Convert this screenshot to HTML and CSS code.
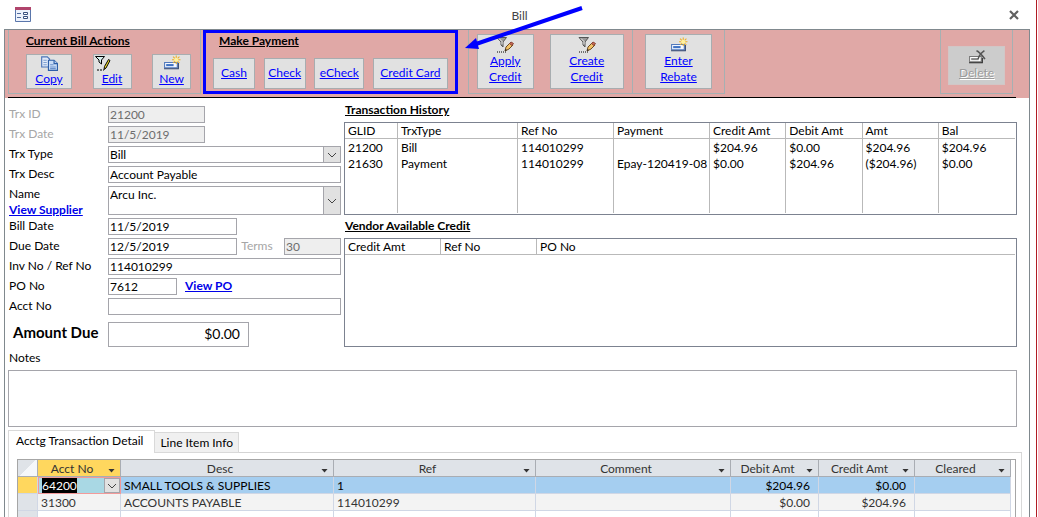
FILE: index.html
```html
<!DOCTYPE html>
<html lang="en">
<head>
  <meta charset="UTF-8">
  <meta name="viewport" content="width=device-width, initial-scale=1.0">
  <title>Bill</title>
  <link rel="stylesheet" href="styles.css">
</head>
<body>
  <!-- shared toolbar icons -->
  <svg class="icon-defs" aria-hidden="true">
    <symbol id="icon-copy" viewBox="0 0 16 14">
      <path d="M1.5 1.5h5l2 2v7h-7z" fill="#dfe9f8" stroke="#4a74b8"/>
      <path d="M3 4.500h3M3 6.500h3M3 8.500h3" stroke="#7f9fd0"/>
      <path d="M7.500 4.500h5l3 3v6h-8z" fill="#c9dcf6" stroke="#2d5ea8"/>
      <path d="M12.500 4.500v3h3" fill="#b8cdec" stroke="#2d5ea8"/>
      <path d="M9 8.500h3M9 10.500h5M9 12h5" stroke="#6a90cc"/>
    </symbol>
    <symbol id="icon-edit" viewBox="0 0 16 16">
      <path d="M.5 1.500h9L6.500 5v4L4 7V5z" fill="#d8f0ee" stroke="#000"/>
      <path d="M2 15h2M5 15h2M8 15h1" stroke="#000"/>
      <path d="M13.500 4.500l1.500 1-4 7.500-2 1.500.5-3z" fill="#f0dc28" stroke="#000"/>
    </symbol>
    <symbol id="icon-filter-edit" viewBox="0 0 18 16">
      <path d="M1 .5h9.500L7 5v5L5 8V5z" fill="#999" stroke="#555"/>
      <path d="M3 1.500l3 3v3" fill="none" stroke="#eee"/>
      <path d="M1 15h1M3 15h1M5 15h1M7 15h1M9 15h1" stroke="#000"/>
      <path d="M9 14l1-4 4-4 3 2-4 4z" fill="#f2c267" stroke="#6b4a20"/>
      <path d="M13.500 6.500l1.500-1.500 2.500 1.500-1.500 2z" fill="#c96b5a" stroke="#8a4436"/>
      <path d="M9 14l.5-2 1.500 1z" fill="#222"/>
    </symbol>
    <symbol id="icon-new" viewBox="0 0 17 14">
      <path d="M1.500 6.500h12v5h-12z" fill="#f4f8ff" stroke="#5279bd"/>
      <path d="M3 8h7v2H3z" fill="#3f72c4"/>
      <path d="M1 12.500h13.500V7" fill="none" stroke="#2a3f6c"/>
      <path d="M12.500 0v8M8.500 4h8M9.500 1l6 6M15.500 1l-6 6" stroke="#f0b020"/>
      <circle cx="12.500" cy="4" r="2" fill="#fff2a0"/>
    </symbol>
    <symbol id="icon-delete" viewBox="0 0 17 14">
      <path d="M1.500 6.500h11v5h-11z" fill="#fff" stroke="#777"/>
      <path d="M3 8h7v2H3z" fill="#888"/>
      <path d="M1 12.500h12.500V8" fill="none" stroke="#222"/>
      <path d="M8 1c3 1 5 4 8 8M15.500 1c-3 2-5 4-6 8" fill="none" stroke="#555" stroke-width="1.500"/>
    </symbol>
  </svg>

  <div class="window">
    <header class="title-bar">
      <svg class="form-icon" viewBox="0 0 16 15" aria-hidden="true">
        <path d="M.5.5h15v14H.5z" fill="#edf2fc" stroke="#5a76ab"/>
        <path d="M0 0h16v3H0z" fill="#b0446c"/>
        <path d="M2 6.500h4M2 10.500h4" stroke="#506a9c"/>
        <path d="M8.500 5.500h4v2h-4zM8.500 9.500h4v2h-4z" fill="#fff" stroke="#38507f"/>
      </svg>
      <h1>Bill</h1>
      <button class="close" aria-label="Close">
        <svg viewBox="0 0 10 10"><path d="M1 1l8 8M9 1L1 9" stroke="#606060" stroke-width="2.200"/></svg>
      </button>
    </header>

    <main class="form">
      <div class="toolbar">
        <section class="group actions">
          <h2>Current Bill Actions</h2>
          <div class="buttons">
            <button class="copy"><svg class="icon"><use href="#icon-copy"/></svg>Copy</button>
            <button class="edit"><svg class="icon"><use href="#icon-edit"/></svg>Edit</button>
            <button class="new"><svg class="icon"><use href="#icon-new"/></svg>New</button>
          </div>
        </section>
        <section class="group payment">
          <h2>Make Payment</h2>
          <div class="buttons">
            <button>Cash</button>
            <button>Check</button>
            <button class="echeck">eCheck</button>
            <button class="card">Credit Card</button>
          </div>
          <svg class="pointer" viewBox="0 0 120 48" aria-hidden="true">
            <path d="M118 4L12 40" stroke="#00f" stroke-width="4"/>
            <path d="M1 44l11-10 3 11z" fill="#00f"/>
          </svg>
        </section>
        <section class="group credit">
          <button class="apply"><svg class="icon"><use href="#icon-filter-edit"/></svg>Apply<br>Credit</button>
          <button class="create"><svg class="icon"><use href="#icon-filter-edit"/></svg>Create<br>Credit</button>
        </section>
        <section class="group rebate">
          <button><svg class="icon"><use href="#icon-new"/></svg>Enter<br>Rebate</button>
        </section>
        <section class="group delete">
          <button disabled><svg class="icon"><use href="#icon-delete"/></svg>Delete</button>
        </section>
      </div>

      <div class="details">
        <div class="fields">
          <label class="off" for="trx-id">Trx ID</label>
          <input class="short" id="trx-id" value="21200" disabled>
          <label class="off" for="trx-date">Trx Date</label>
          <input class="short" id="trx-date" value="11/5/2019" disabled>
          <label for="trx-type">Trx Type</label>
          <select id="trx-type"><option>Bill</option></select>
          <label for="trx-desc">Trx Desc</label>
          <input id="trx-desc" value="Account Payable">
          <div class="name-label">
            <label for="name">Name</label>
            <a href="#supplier">View Supplier</a>
          </div>
          <select class="name" id="name"><option>Arcu Inc.</option></select>
          <label for="bill-date">Bill Date</label>
          <input class="date" id="bill-date" value="11/5/2019">
          <label for="due-date">Due Date</label>
          <div class="line due">
            <input class="date" id="due-date" value="12/5/2019">
            <label class="off" for="terms">Terms</label>
            <input class="terms" id="terms" value="30" disabled>
          </div>
          <label for="inv-no">Inv No / Ref No</label>
          <input id="inv-no" value="114010299">
          <label for="po-no">PO No</label>
          <div class="line po">
            <input id="po-no" value="7612">
            <a href="#po">View PO</a>
          </div>
          <label for="acct-no">Acct No</label>
          <input id="acct-no">
          <label class="amount-label" for="amount">Amount Due</label>
          <input class="amount" id="amount" value="$0.00">
        </div>

        <div class="lists">
          <h2>Transaction History</h2>
          <div class="list-box">
            <table class="history">
              <thead>
                <tr>
                  <th class="glid">GLID</th>
                  <th class="type">TrxType</th>
                  <th class="ref">Ref No</th>
                  <th class="ref">Payment</th>
                  <th>Credit Amt</th>
                  <th>Debit Amt</th>
                  <th>Amt</th>
                  <th>Bal</th>
                </tr>
              </thead>
              <tbody>
                <tr><td>21200</td><td>Bill</td><td>114010299</td><td></td><td>$204.96</td><td>$0.00</td><td>$204.96</td><td>$204.96</td></tr>
                <tr><td>21630</td><td>Payment</td><td>114010299</td><td>Epay-120419-08</td><td>$0.00</td><td>$204.96</td><td>($204.96)</td><td>$0.00</td></tr>
                <tr class="blank"><td></td><td></td><td></td><td></td><td></td><td></td><td></td><td></td></tr>
              </tbody>
            </table>
          </div>
          <h2>Vendor Available Credit</h2>
          <div class="list-box vendor-box">
            <table class="vendor">
              <thead>
                <tr><th class="ref">Credit Amt</th><th class="ref">Ref No</th><th>PO No</th></tr>
              </thead>
            </table>
          </div>
        </div>
      </div>

      <div class="notes">
        <label for="notes">Notes</label>
        <textarea id="notes"></textarea>
      </div>

      <div class="tabs" role="tablist">
        <button class="tab active" role="tab" aria-selected="true">Acctg Transaction Detail</button>
        <button class="tab" role="tab" aria-selected="false">Line Item Info</button>
      </div>
      <div class="tab-panel">
        <div class="sheet-box">
          <table class="sheet">
            <thead>
              <tr>
                <th class="selector"></th>
                <th class="acct sorted"><div>Acct No<button aria-label="Filter Acct No"></button></div></th>
                <th class="desc"><div>Desc<button aria-label="Filter Desc"></button></div></th>
                <th class="refcol"><div>Ref<button aria-label="Filter Ref"></button></div></th>
                <th class="comment"><div>Comment<button aria-label="Filter Comment"></button></div></th>
                <th class="debit"><div>Debit Amt<button aria-label="Filter Debit Amt"></button></div></th>
                <th class="money"><div>Credit Amt<button aria-label="Filter Credit Amt"></button></div></th>
                <th class="money"><div>Cleared<button aria-label="Filter Cleared"></button></div></th>
              </tr>
            </thead>
            <tbody>
              <tr class="current">
                <td class="selector"></td>
                <td class="editing"><div><span>64200</span><button aria-label="Choose account"></button></div></td>
                <td>SMALL TOOLS &amp; SUPPLIES</td><td>1</td><td></td>
                <td class="num">$204.96</td><td class="num">$0.00</td><td></td>
              </tr>
              <tr class="alt">
                <td class="selector"></td>
                <td>31300</td><td>ACCOUNTS PAYABLE</td><td>114010299</td><td></td>
                <td class="num">$0.00</td><td class="num">$204.96</td><td></td>
              </tr>
              <tr>
                <td class="selector"></td>
                <td></td><td></td><td></td><td></td><td></td><td></td><td></td>
              </tr>
            </tbody>
          </table>
        </div>
      </div>
    </main>
  </div>
</body>
</html>
```
FILE: styles.css
```css
* {
  box-sizing: border-box;
}
body {
  margin: 0;
  height: 100vh;
  overflow: hidden;
  padding-right: 1px;
  background: #fff;
  color: #000;
  font-family: Lato, "Liberation Sans", sans-serif;
  font-size: 12px;
  line-height: 16px;
}
button, input, select, textarea {
  font: inherit;
  color: inherit;
  margin: 0;
}
h1, h2 {
  margin: 0;
  font-size: 12px;
}
h2 {
  text-decoration: underline;
}
a {
  color: #0000e8;
  font-weight: bold;
}
.icon-defs {
  display: none;
}
.window {
  display: flex;
  flex-direction: column;
  height: 100%;
  padding: 0 6px 0 4px;
  border-right: 1px solid #b01c24;
}

/* title bar */
.title-bar {
  display: grid;
  grid-template-columns: 24px 1fr 24px;
  align-items: center;
  height: 29px;
  flex: none;
  padding: 0 6px 0 11px;
}
.title-bar h1 {
  color: #444;
  font-weight: normal;
  text-align: center;
  padding-top: 2px;
}
.form-icon {
  width: 16px;
  height: 15px;
}
.close {
  justify-self: end;
  width: 20px;
  height: 20px;
  padding: 5px;
  border: 0;
  background: none;
}
.close svg {
  display: block;
}
.form {
  flex: 1;
  display: flex;
  flex-direction: column;
  border: 1px solid #80898e;
  border-bottom: 0;
}

/* toolbar */
.toolbar {
  display: flex;
  align-items: flex-start;
  height: 68px;
  padding: 0 16px 0 3px;
  background: linear-gradient(#000, #000) 3px 100% / calc(100% - 16px) 1px no-repeat, #e0a8a6;
}
.group {
  height: 64px;
  border: 1px solid #a6b0b2;
  border-top: 0;
}
.buttons {
  display: flex;
  align-items: flex-end;
}
.toolbar button {
  display: flex;
  flex-direction: column;
  align-items: center;
  justify-content: center;
  padding: 0 0 2px;
  border: 1px solid #a8adb0;
  background: #e1e1e1;
  color: #00f;
  text-decoration: underline;
}
.toolbar .icon {
  flex: none;
  width: 18px;
  height: 16px;
}
.actions {
  width: 193px;
  padding: 3px 9px 0 17px;
}
.actions .buttons {
  justify-content: space-between;
  margin-top: 5px;
}
.actions button {
  width: 39px;
  height: 35px;
}
.actions .copy {
  width: 46px;
}
.actions .edit .icon {
  align-self: flex-start;
}
.payment {
  position: relative;
  width: 255px;
  margin: 0 4px 0 2px;
  padding: 0 7px 0 7px;
  border: 3px solid #00f;
}
.payment h2 {
  margin-left: 6px;
}
.payment .buttons {
  justify-content: space-between;
  margin-top: 9px;
}
.payment button {
  width: 42px;
  height: 31px;
}
.payment .echeck {
  width: 50px;
}
.payment .card {
  width: 75px;
}
/* callout arrow ending at the payment group */
.pointer {
  position: absolute;
  left: 258px;
  top: -29px;
  width: 120px;
  height: 48px;
}
.credit {
  display: flex;
  gap: 16px;
  width: 165px;
  margin-left: 6px;
  padding: 4px 8px;
}
.credit button, .rebate button {
  height: 55px;
}
.apply {
  width: 57px;
}
.create {
  width: 75px;
}
.rebate {
  width: 92px;
  padding: 4px 12px;
  border-left: 0;
}
.rebate button {
  width: 67px;
}
.delete {
  width: 73px;
  margin-left: auto;
  padding: 16px 7px;
}
.toolbar .delete button {
  width: 57px;
  height: 39px;
  border-color: #d2c6c6;
  background: #ccc;
  color: #9b9b9b;
  text-shadow: 1px 1px #fff;
}

/* entry fields */
.details {
  display: flex;
  gap: 3px;
  padding: 8px 12px 0 4px;
}
.fields {
  flex: none;
  display: grid;
  grid-template-columns: 99px 233px;
  row-gap: 3px;
  align-items: start;
}
.off {
  color: #a6a6a6;
}
input, select {
  width: 100%;
  height: 17px;
  padding: 0 1px;
  border: 1px solid #a5a5ab;
  border-radius: 0;
  background-color: #fff;
}
input:disabled {
  background: #eee;
  color: #6d6d6d;
}
select {
  appearance: none;
  background-image: url("data:image/svg+xml,%3Csvg xmlns='http://www.w3.org/2000/svg' viewBox='0 0 17 15'%3E%3Cpath d='M5 6l4 4 4-4' fill='none' stroke='%23444'/%3E%3C/svg%3E"), linear-gradient(#a5a5ab, #a5a5ab), linear-gradient(#e1e1e1, #e1e1e1);
  background-position: right center, right 16px top, right top;
  background-size: 17px 15px, 1px 100%, 16px 100%;
  background-repeat: no-repeat;
}
.fields .name {
  height: 29px;
  padding-bottom: 12px;
}
.name-label {
  display: flex;
  flex-direction: column;
  height: 29px;
}
.short {
  width: 97px;
}
.date {
  width: 129px;
}
.line {
  display: flex;
}
.due {
  justify-content: space-between;
}
.due label {
  margin-right: 7px;
}
.terms {
  width: 57px;
}
.po {
  gap: 8px;
}
.po input {
  width: 69px;
}
.fields .amount {
  width: 141px;
  height: 25px;
  margin-top: 4px;
  padding: 0 8px 2px 1px;
  font-size: 14px;
  text-align: right;
}
.amount-label {
  padding: 6px 0 0 4px;
  font-size: 15px;
  font-weight: bold;
}

/* list boxes */
.lists {
  flex: 1;
  min-width: 0;
}
.lists h2 {
  margin: -4px 0 4px 1px;
}
.list-box {
  height: 93px;
  padding: 0 1px 1px 0;
  border: 1px solid #7c8290;
}
.list-box + h2 {
  margin-top: 3px;
}
.vendor-box {
  height: 109px;
}
table {
  width: 100%;
  border-collapse: separate;
  border-spacing: 0;
  table-layout: fixed;
}
th, td {
  height: 16px;
  padding: 0 0 0 3px;
  font-weight: normal;
  line-height: 15px;
  text-align: left;
  white-space: nowrap;
}
.history th, .vendor th {
  border-bottom: 1px solid #b9b9b9;
}
.history th:not(:last-child), .history td:not(:last-child), .vendor th:not(:last-child) {
  border-right: 1px solid #b9b9b9;
}
.history .blank td {
  height: 42px;
}
.history .glid {
  width: 53px;
}
.history .type {
  width: 120px;
}
.list-box .ref {
  width: 96px;
}

.notes {
  padding: 3px 12px 0 3px;
}
.notes label {
  display: block;
  padding-left: 1px;
}
textarea {
  display: block;
  width: 100%;
  height: 57px;
  margin-top: 4px;
  border: 1px solid #a5a5ab;
  resize: none;
}

/* tabs */
.tabs {
  display: flex;
  align-items: flex-end;
  height: 23px;
  margin: 3px 7px 0 3px;
  box-shadow: inset 0 -1px #d4d4d4;
}
.tab {
  height: 21px;
  padding: 0 5px;
  border: 1px solid #d9d9d9;
  border-left: 0;
  background: #f0f0f0;
}
.tab.active {
  height: 23px;
  padding: 0 11px 2px 7px;
  border-left: 1px solid #d9d9d9;
  border-bottom: 0;
  background: #fff;
}
.tab-panel {
  flex: 1;
  margin: 0 7px 0 3px;
  padding: 6px 5px 0 8px;
  border: solid #d9d9d9;
  border-width: 0 1px;
}
.sheet-box {
  height: 100%;
  padding-right: 4px;
  border: solid #a6a6a6;
  border-width: 1px 1px 0;
}
.sheet th, .sheet td {
  height: 17px;
  border-right: 1px solid #d0d7e5;
  border-bottom: 1px solid #d0d7e5;
  color: #333;
}
.sheet th {
  padding: 0;
  border-color: #a9adb3;
  background: #dfe3e8;
}
.sheet th div {
  display: flex;
  justify-content: center;
  position: relative;
  padding-right: 14px;
}
.sheet th button {
  position: absolute;
  right: 5px;
  top: 8px;
  width: 7px;
  height: 4px;
  padding: 0;
  border: 0;
  background: #333;
  clip-path: polygon(0 0, 100% 0, 50% 100%);
}
.sheet .selector {
  width: 20px;
  background: #dfe3e8;
}
.sheet th.selector {
  background: linear-gradient(135deg, #dfe3e8 50%, #f5f7fa 50%);
}
.sheet .sorted {
  background: #ffd75e;
}
.sheet .acct {
  width: 83px;
}
.sheet .desc {
  width: 213px;
}
.sheet .refcol {
  width: 202px;
}
.sheet .debit {
  width: 88px;
}
.sheet .money {
  width: 96px;
}
.sheet .current td {
  background: #a5cef0;
  color: #000;
}
.sheet .current .selector {
  background: #ffd75e;
}
.sheet .alt td:not(.selector) {
  background: #f3f3f3;
}
.sheet .num {
  padding-right: 8px;
  text-align: right;
}
.sheet .current .editing {
  padding: 0;
  border: 1px solid #f29a9a;
  background: #a9d8e4;
}
.editing div {
  display: flex;
  justify-content: space-between;
  height: 15px;
  padding-left: 3px;
}
.editing span {
  background: #000;
  color: #fff;
}
.editing button {
  width: 16px;
  padding: 0;
  border: 1px solid #a5a5ab;
  background: #e1e1e1 url("data:image/svg+xml,%3Csvg xmlns='http://www.w3.org/2000/svg' viewBox='0 0 14 13'%3E%3Cpath d='M3 5l4 4 4-4' fill='none' stroke='%23444'/%3E%3C/svg%3E") center / 14px 13px no-repeat;
}
```
